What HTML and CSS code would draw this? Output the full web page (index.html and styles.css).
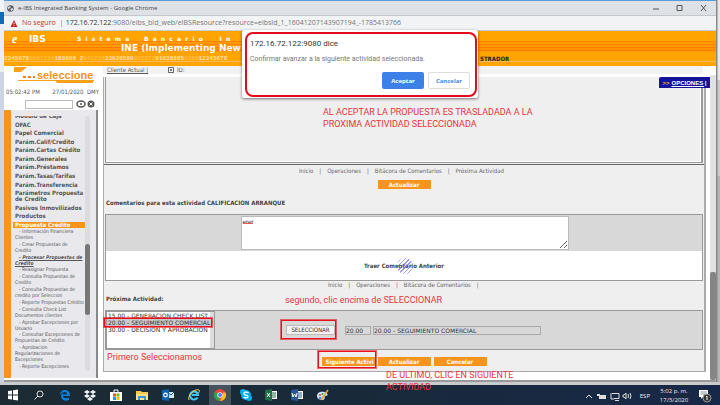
FILE: index.html
```html
<!DOCTYPE html>
<html lang="es">
<head>
<meta charset="utf-8">
<title>e-IBS Integrated Banking System</title>
<link rel="stylesheet" href="styles.css">
</head>
<body>
<div class="desktop">
  <div class="behind-left"></div>
  <div class="window">
    <header class="titlebar">
      <svg class="globe" viewBox="0 0 16 16"><circle cx="8" cy="8" r="7.5" fill="#555b61"/><path d="M3 4l4-1 2 2-3 2-2 3-2-3zM9 8l4-1 1 3-4 4-2-3z" fill="#dee1e6"/></svg>
      <span class="title">e-IBS Integrated Banking System - Google Chrome</span>
      <svg class="winctl" viewBox="0 0 58 10"><path d="M3 6h6M27 2.500h5v5h-5zM51 2l5 6M56 2l-5 6" fill="none" stroke="#555" stroke-width="1"/></svg>
    </header>
    <div class="address">
      <svg class="warn" viewBox="0 0 8 8"><path d="M4 0l4 8H0z" fill="#c5221f"/><path d="M4 3v2M4 6v1" stroke="#fff"/></svg>
      <span class="unsafe">No seguro</span><span class="sep"></span>
      <span class="url"><b>172.16.72.122</b>:9080/eibs_bid_web/eIBSResource?resource=eibsId_1_16041207143907194_-1785413766</span>
    </div>
    <div class="banner">
      <div class="brand"><i class="brand-e">e</i><span class="brand-ibs">IBS</span><span class="system">S &nbsp;i &nbsp;s &nbsp;t &nbsp;e &nbsp;m &nbsp;a &nbsp; &nbsp; &nbsp; B &nbsp;a &nbsp;n &nbsp;c &nbsp;a &nbsp;r &nbsp;i &nbsp;o &nbsp; &nbsp; &nbsp; &nbsp;I &nbsp;n</span></div>
      <div class="bank">INE (Implementing New</div>
      <div class="digits"><span>2345678<em>0001234</em>189809 2<em>041234</em>33920580<em>002872</em>91038085<em>4380</em>12345678</span><b class="role">STRADOR</b></div>
    </div>
    <div class="page">
      <aside class="side">
        <div class="logo">
          <svg class="logo-art" viewBox="0 0 86 18"><path d="M5 0h13L12 5H5z" fill="#f9a01b"/><path d="M9 13.500h76" stroke="#f9a01b"/><path d="M46 13h38v3H48z" fill="#f9a01b"/><path d="M14 10h3M19 10h3M24 10h2" stroke="#f58220" stroke-width="2"/></svg>
          <span class="logo-text">seleccione</span>
        </div>
        <div class="clock"><span>05:02:42 PM</span><span>27/01/2020 &nbsp;DMY</span></div>
        <div class="search">
          <input class="search-box" type="text" aria-label="Buscar">
          <svg class="eyes" viewBox="0 0 20 8"><ellipse cx="5" cy="4" rx="4" ry="3" fill="none" stroke="#555" stroke-width="1.500"/><circle cx="5" cy="4" r="1" fill="#555"/><circle cx="15" cy="4" r="3.500" fill="#555"/><path d="M13.500 2.500l3 3M16.500 2.500l-3 3" stroke="#fff"/></svg>
        </div>
        <div class="menu">
          <nav class="menu-lists">
            <ul class="groups">
              <li>Módulo de Caja</li><li>OFAC</li><li>Papel Comercial</li><li>Parám.Calif/Credito</li><li>Parám.Cartas Crédito</li><li>Parám.Generales</li><li>Parám.Préstamos</li><li>Parám.Tasas/Tarifas</li><li>Parám.Transferencia</li><li>Parámetros Propuesta<br>de Credito</li><li>Pasivos Inmovilizados</li><li>Productos</li><li class="open">Propuesta Crédito</li>
            </ul>
            <ul class="options">
              <li>Información Financiera<br>Clientes</li><li>Crear Propuestas de<br>Credito</li><li class="current">Procesar Propuestas de<br>Credito</li><li>Reasignar Propuesta</li><li>Consulta Propuestas de<br>Credito</li><li>Consulta Propuestas de<br>credito por Seleccion</li><li>Reporte Propuestas Crédito</li><li>Consulta Check List<br>Documentos clientes</li><li>Aprobar Excepciones por<br>Usuario</li><li>Consultar Excepciones de<br>Propuestas de Crédito</li><li>Aprobacion<br>Regularizaciones de<br>Excepciones</li><li>Reporte Excepciones</li>
            </ul>
          </nav>
          <div class="menu-track"><div class="menu-thumb"></div></div>
        </div>
      </aside>
      <main class="main">
        <div class="client"><a href="#c">Cliente Actual |</a><svg class="box-icon" viewBox="0 0 7 7"><path d="M.5.5h6v6h-6z" fill="#fff" stroke="#444"/><path d="M2 3.500h3M3.500 2v3" stroke="#444"/></svg><span>ID:</span></div>
        <div class="frame">
          <a class="opciones" href="#o"><b>&gt;&gt;</b><span>OPCIONES |</span></a>
          <section class="upper"></section>
          <p class="note note-accept">AL ACEPTAR LA PROPUESTA ES TRASLADADA A LA<br>PROXIMA ACTIVIDAD SELECCIONADA</p>
          <nav class="links links-top"><a href="#1">Inicio</a><i>|</i><a href="#2">Operaciones</a><i>|</i><a href="#3">Bitácora de Comentarios</a><i>|</i><a href="#4">Próxima Actividad</a></nav>
          <div class="actions"><button class="btn">Actualizar</button></div>
          <label class="heading" for="coment">Comentarios para esta actividad CALIFICACION ARRANQUE</label>
          <section class="comments">
            <div class="comment-row"><textarea id="coment" class="comment-text" spellcheck="false">erer</textarea><span class="squiggle"></span></div>
            <div class="previous"><b>Traer Comentario Anterior</b><span class="busy"></span></div>
          </section>
          <nav class="links"><a href="#1">Inicio</a><i>|</i><a href="#2">Operaciones</a><i>|</i><a href="#3">Bitácora de Comentarios</a><i>|</i></nav>
          <div class="next-head"><label class="heading" for="next">Próxima Actividad:</label><p class="note note-second">segundo, clic encima de SELECCIONAR</p></div>
          <section class="next">
            <div class="list-wrap">
              <select id="next" class="list" size="4"><option>15.00 - GENERACION CHECK LIST</option><option class="picked">20.00 - SEGUIMIENTO COMERCIAL</option><option>30.00 - DECISION Y APROBACION</option></select>
              <span class="mark mark-list"></span>
            </div>
            <div class="pick">
              <span class="pick-wrap"><button class="select-btn">SELECCIONAR</button><span class="mark mark-pick"></span></span>
              <input class="code" aria-label="Código" value="20.00" readonly>
              <input class="name" aria-label="Actividad" value="20.00 - SEGUIMIENTO COMERCIAL" readonly>
            </div>
          </section>
          <div class="footer">
            <p class="note note-first">Primero Seleccionamos</p>
            <span class="pick-wrap"><button class="btn btn-next">Siguiente Activi</button><span class="mark mark-next"></span></span>
            <button class="btn">Actualizar</button>
            <button class="btn">Cancelar</button>
            <p class="note note-last">DE ULTIMO, CLIC EN SIGUIENTE<br>ACTIVIDAD</p>
          </div>
        </div>
      </main>
      <div class="scroll"><div class="scroll-thumb"></div></div>
    </div>
  </div>
  <div class="behind-right"></div>
  <div class="dialog" role="dialog" aria-labelledby="dlg">
    <h1 id="dlg" class="dialog-title">172.16.72.122:9080 dice</h1>
    <p class="dialog-text">Confirmar avanzar a la siguiente actividad seleccionada.</p>
    <div class="dialog-actions"><button class="ok">Aceptar</button><button class="cancel">Cancelar</button></div>
  </div>
</div>
<footer class="taskbar">
  <div class="apps">
    <span class="app"><svg viewBox="0 0 12 12"><path d="M1 2l4-.6v4.200H1zM6 1.300L11 .6v5H6zM1 6.400h4v4.200L1 10zM6 6.400h5v5l-5-.7z" fill="#fff"/></svg></span>
    <span class="app"><svg viewBox="0 0 12 12"><circle cx="7" cy="5" r="3" fill="none" stroke="#ddd"/><path d="M5 7L1.500 10.500" stroke="#ddd"/></svg></span>
    <span class="app"><svg viewBox="0 0 12 12"><path d="M1 6C1 3 3 1 6 1s5 2 5 6H4c0 2 3 3 6 1.500V11C5 13 2 10 2 7c0-2 2-3 3-3-1 .5-1 1-1 1.500h4C8 2 3 2.500 1 6z" fill="#0a7fdb"/></svg></span>
    <span class="app"><svg viewBox="0 0 12 12"><path d="M3 1l3 2-3 2-3-2zM9 1l3 2-3 2-3-2zM3 5l3 2-3 2-3-2zM9 5l3 2-3 2-3-2zM6 8l3 2-3 2-3-2z" fill="#f2f6f8"/></svg></span>
    <span class="app"><svg viewBox="0 0 12 12"><path d="M4 3V1h4v2" fill="none" stroke="#fff"/><path d="M0 3h12v9H0z" fill="#fff"/><path d="M3 4.500h3v3H3z" fill="#f25022"/><path d="M6.500 4.500h3v3h-3z" fill="#7fba00"/><path d="M3 8h3v3H3z" fill="#00a4ef"/><path d="M6.500 8h3v3h-3z" fill="#ffb900"/></svg></span>
    <span class="app run"><svg viewBox="0 0 12 12"><path d="M0 2h5l1 1h6v8H0z" fill="#f6c84c"/><path d="M0 5h12v6H0z" fill="#ffe08a"/><path d="M2 7h8v4H8V9H4v2H2z" fill="#3a96dd"/></svg></span>
    <span class="app run"><svg viewBox="0 0 12 12"><path d="M5 3h7v6H5z" fill="#cfe6fa"/><path d="M5 3l4 3 3-3" fill="none" stroke="#0a64ad"/><path d="M0 1l7-1v12l-7-1z" fill="#0a64ad"/><circle cx="3.500" cy="6" r="1.800" fill="none" stroke="#fff" stroke-width="1.200"/></svg></span>
    <span class="app"><svg viewBox="0 0 12 12"><path d="M9.500 8.500A4 4 0 1 1 10 6H4" fill="none" stroke="#45c1f0" stroke-width="2.200"/><path d="M1 11C-1 7 7-1 11 1c1 1 0 2-.5 3" fill="none" stroke="#ffd24d"/></svg></span>
    <span class="app run active"><svg viewBox="0 0 12 12"><circle cx="6" cy="6" r="6" fill="#e8453c"/><path d="M6 6L.8 3A6 6 0 0 0 6 12z" fill="#2ba24c"/><path d="M6 12l3-6V3.500h2.500A6 6 0 0 1 6 12z" fill="#fbc116"/><circle cx="6" cy="6" r="2.700" fill="#fff"/><circle cx="6" cy="6" r="2" fill="#4285f4"/></svg></span>
    <span class="app run"><svg viewBox="0 0 12 12"><circle cx="6" cy="6" r="5" fill="#00aff0"/><circle cx="3" cy="3" r="3" fill="#00aff0"/><circle cx="9" cy="9" r="3" fill="#00aff0"/><path d="M8.500 4C7 2.500 3.500 3 4 5c.5 1.500 4 .8 4 2.500S4.500 9.500 3.500 8" fill="none" stroke="#fff" stroke-width="1.300"/></svg></span>
    <span class="app run"><svg viewBox="0 0 12 12"><path d="M6 2h6v8H6z" fill="#fff"/><path d="M7 4h4M7 6h4M7 8h4" stroke="#1e7145"/><path d="M0 1l7-1v12l-7-1z" fill="#1e7145"/><path d="M2 4l3 4M5 4L2 8" stroke="#fff"/></svg></span>
    <span class="app run"><svg viewBox="0 0 12 12"><path d="M6 2h6v8H6z" fill="#fff"/><path d="M7 4h4M7 6h4M7 8h4" stroke="#2b579a"/><path d="M0 1l7-1v12l-7-1z" fill="#2b579a"/><path d="M1 4l1 4 1.500-3L5 8l1-4" fill="none" stroke="#fff"/></svg></span>
    <span class="app run"><svg viewBox="0 0 12 12"><path d="M0 7c0-4 4-5 8-4 4 2 3 4 0 4-1 1 1 3-2 4-3 0-6-1-6-4z" fill="#c6e2f3"/><circle cx="3" cy="6" r="1" fill="#e84a3c"/><circle cx="5.500" cy="5" r="1" fill="#41a348"/><circle cx="3" cy="9" r="1" fill="#3471c8"/><path d="M4 11L11 1" stroke="#e9a13b" stroke-width="1.500"/></svg></span>
  </div>
  <div class="tray">
    <svg class="tray-icons" viewBox="0 0 48 12"><path d="M1 8l3-3 3 3" fill="none" stroke="#eee"/><path d="M14 5h7v4h-7zM12 4h3v2h-3z" fill="#ddd"/><path d="M27 3.500h7v5h-5M26 3v6h3M30 10.500h4" fill="none" stroke="#ddd"/><path d="M38 5h1l2-2v6l-2-2h-1zM43 4q1 2 0 4M45 3q2 3 0 6" fill="none" stroke="#ddd"/></svg>
    <span>ESP</span>
    <div class="date">5:02 p. m.<br>17/3/2020</div>
    <svg class="action" viewBox="0 0 14 14"><path d="M1 1h9v7H5L3 10V8H1z" fill="#fff"/><path d="M2.500 3h6M2.500 5h6" stroke="#8794a8"/><circle cx="9" cy="9" r="4" fill="#333" stroke="#999"/><path d="M8 8l1-1v4" fill="none" stroke="#fff"/></svg>
  </div>
</footer>
</body>
</html>
```
FILE: styles.css
```css
* { box-sizing: border-box; }
body {
  margin: 0; min-height: 100vh; overflow: hidden;
  display: flex; flex-direction: column;
  font: 6px/8px "DejaVu Sans Condensed", "DejaVu Sans", sans-serif; color: #555;
}
p, h1, ul { margin: 0; padding: 0; font-weight: normal; }
ul { list-style: none; }
a { color: inherit; text-decoration: none; }
i { font-style: normal; }
svg { display: block; flex: none; }
button, input, textarea, select { font: inherit; border-radius: 0; margin: 0; padding: 0; }

.desktop { position: relative; flex: 1; display: flex; padding-bottom: 3px; background: #c9cbcd; }
.behind-left { width: 4px; background: linear-gradient(#f0f4f8 12px, #0f6ab8 12px 24px, #e9edf5 24px 72px, #cdd5e4 72px); }
.behind-right { width: 4px; background: linear-gradient(90deg, #888 0 1px, transparent 2px), linear-gradient(#e8e8e8 80px, #ccc 80px 176px, #b5b5b5 176px); }
.window { flex: 1; display: flex; flex-direction: column; background: #fff; border-top: 1px solid #5b9bd5; border-bottom: 2px solid #999; }

.titlebar { display: flex; align-items: center; height: 15px; padding: 0 8px 0 3px; gap: 4px; background: #dee1e6; border-bottom: 1px solid #c4c7cb; }
.globe { width: 7px; height: 7px; }
.title { flex: 1; font: 6px/10px "Open Sans", sans-serif; color: #444; }
.winctl { width: 58px; height: 10px; }
.address { display: flex; align-items: center; height: 15px; padding-left: 6px; background: #f1f3f4; font: 7px/10px "Open Sans", sans-serif; color: #777; border-bottom: 1px solid #ccc; }
.warn { width: 8px; height: 7px; margin-right: 4px; }
.unsafe { color: #c5352b; }
.sep { width: 1px; height: 7px; margin: 0 4px 0 5px; background: #bbb; }
.url b { font-weight: normal; color: #333; }

.banner {
  height: 35px; padding: 3px 0 0 8px; color: #fff; overflow: hidden; white-space: nowrap;
  background: linear-gradient(transparent 10px, #ff8300 10px 11px, #ff9a00 11px 13px, #ff8300 13px 14px, #ff9a00 14px 16px, #ff7b00 16px 17px, #ff9300 17px 19px, #ff7b00 19px 20px, #ffa200 20px 21px, transparent 21px 30px, #ffbd59 30px 31px, transparent 31px), #ffa400;
}
.brand { display: flex; align-items: center; height: 10px; font: bold 9px/10px "DejaVu Sans", sans-serif; }
.brand-e { width: 13px; font: italic bold 12px/10px "Liberation Serif", serif; }
.brand-ibs { width: 52px; padding-left: 4px; }
.system { font: bold 6px/10px "DejaVu Sans", sans-serif; }
.bank { height: 10px; padding-left: 109px; font: bold 9px/9px "DejaVu Sans", sans-serif; }
.digits { display: flex; align-items: center; height: 10px; font: bold 6px/8px "Liberation Mono", monospace; color: #ffe2b0; margin-left: -8px; }
.digits span { width: 476px; overflow: hidden; }
.digits em { font-style: normal; color: #ffbe50; }
.role { font: bold 6px/8px "DejaVu Sans Condensed", "DejaVu Sans", sans-serif; color: #222; }

.page { flex: 1; display: flex; }
.side { width: 99px; display: flex; flex-direction: column; padding-bottom: 2px; }
.logo { position: relative; height: 20px; padding: 1px 0 0 5px; }
.logo-art { width: 86px; height: 18px; }
.logo-text { position: absolute; left: 33px; top: 2px; font: bold 11px/14px "Liberation Sans", sans-serif; color: #f6921e; }
.clock { display: flex; justify-content: space-between; height: 13px; padding: 2px 4px 0 2px; white-space: nowrap; }
.search { display: flex; align-items: center; height: 10px; padding-left: 21px; gap: 3px; }
.search-box { width: 48px; height: 9px; border: 1px solid #bbb; background: #fff; }
.eyes { width: 20px; height: 8px; }
.menu { flex: 1; display: flex; width: 94px; margin-top: 1px; padding-right: 6px; background: #e9e9ed; border-left: 7px solid #f7941d; border-right: 2px solid #888; line-height: 6px; white-space: nowrap; }
.menu-lists { flex: 1; margin-top: 6px; height: 254px; overflow: hidden; }
.groups, .options { display: flex; flex-direction: column; justify-content: space-between; }
.groups { height: 115px; margin-top: -3px; padding-left: 4px; font-weight: bold; }
.open { margin-left: -2px; padding-left: 2px; color: #fff; background: #f7941d; }
.options { height: 141px; padding-left: 4px; font-size: 5px; }
.options li::before { content: " - "; padding-left: 4px; }
.current { font-weight: bold; font-style: italic; text-decoration: underline; }
.menu-track { width: 5px; margin: 6px 0 7px; background: #dcdce0; border-radius: 3px; }
.menu-thumb { height: 71px; margin-top: 128px; background: #777; border-radius: 3px; }

.main { flex: 1; display: flex; flex-direction: column; }
.client { display: flex; align-items: center; gap: 3px; height: 8px; padding-left: 4px; margin-right: 3px; background: #f2f2f2; }
.client a { width: 58px; text-decoration: underline; }
.box-icon { width: 6px; height: 6px; }
.frame { position: relative; margin-top: 3px; background: #efefef; border: solid #aaa; border-width: 0 2px 1px 1px; }
.upper { height: 86px; margin: 0 1px 1px; border: solid #999; border-width: 0 2px 1px 1px; box-shadow: inset -1px -1px #fff; }
.opciones { position: absolute; right: -6px; top: 0; width: 51px; height: 11px; display: flex; gap: 2px; align-items: center; justify-content: center; background: #14149a; color: #fff; font: bold 6px/10px "Liberation Sans", sans-serif; border-radius: 2px 0 0; }
.opciones b { color: #f2b233; }
.opciones span { text-decoration: underline; }
.links { display: flex; gap: 6px; height: 10px; margin-left: 224px; color: #666; white-space: nowrap; }
.links-top { height: 15px; margin-left: 0; padding: 2px 0 0 195px; border-top: 1px solid #666; }
.actions { display: flex; justify-content: center; padding: 1px 0 0; height: 20px; }
.btn { width: 53px; height: 9px; border: 0; background: #f7941d; color: #fff; font: bold 6px/8px "DejaVu Sans Condensed", "DejaVu Sans", sans-serif; white-space: nowrap; overflow: hidden; }
.btn-next { padding-left: 4px; text-align: left; }
.heading { display: block; padding-left: 2px; font-weight: bold; color: #444; }
.comments { margin: 7px 1px 0; border: 1px solid #999; background: #fff; }
.comment-row { position: relative; display: flex; justify-content: center; height: 36px; padding: 1px 0; background: #d8d8d8; }
.comment-text { width: 328px; margin-left: 1px; padding: 1px; border: 1px solid #bbb; background: #fff; color: #222; resize: both; }
.squiggle { position: absolute; left: 137px; top: 8px; width: 10px; height: 1px; background: #e55; }
.previous { position: relative; display: flex; justify-content: center; align-items: center; height: 29px; color: #444; }
.busy { position: absolute; left: 50%; top: 7px; width: 16px; height: 16px; margin-left: -7px; border-radius: 50%; background: repeating-linear-gradient(135deg, #6464e6aa 0 1px, transparent 1px 3px); }
.next-head { position: relative; padding-top: 4px; height: 19px; }
.next { display: flex; height: 40px; margin: 0 1px; border: 1px solid #999; background: #d8d8d8; }
.list-wrap { position: relative; width: 109px; }
.list { width: 109px; height: 38px; border: 1px solid #999; background: linear-gradient(270deg, #ddd 4px, #fff 4px); overflow: hidden scroll; color: #333; scrollbar-width: none; }
.list, .code, .name { font-family: "DejaVu Sans", sans-serif; }
.list option { padding: 0 1px; min-height: 7px; line-height: 7px; overflow: hidden; }
.picked { background: #c8c8c8; }
.mark { position: absolute; border: 1px solid #e8101c; box-shadow: 0 0 0 1px #e8101c99; pointer-events: none; }
.mark-list { left: -2px; right: 3px; top: 7px; height: 9px; }
.pick { display: flex; align-items: center; flex: 1; padding-left: 71px; }
.pick-wrap { position: relative; display: flex; }
.select-btn { width: 49px; height: 10px; border: 1px solid #bbb; background: #f2f2f2; color: #333; white-space: nowrap; }
.mark-pick { left: -5px; right: -1px; top: -5px; bottom: -4px; }
.code, .name { height: 9px; border: 1px solid #aaa; background: #d8d8d8; color: #333; }
.code { width: 26px; margin: 0 2px 0 10px; }
.name { width: 168px; }
.footer { position: relative; display: flex; justify-content: center; align-items: flex-start; gap: 3px; height: 21px; padding-top: 7px; }
.mark-next { left: -4px; right: -1px; top: -6px; bottom: -2px; }
.note { position: absolute; font: 9px/12px Roboto, sans-serif; color: #e8343c; white-space: nowrap; }
.note-accept { left: 219px; top: 29px; }
.note-second { left: 181px; top: 3px; }
.note-first { left: 3px; top: 1px; }
.note-last { left: 282px; top: 19px; }
.scroll { width: 6px; margin: 9px 0 0 4px; background: #e2e2e2; }
.scroll-thumb { height: 108px; margin-top: 197px; background: #858585; border-radius: 2px; }

.dialog { position: absolute; top: 30px; left: 50%; width: 236px; height: 68px; margin-left: -118px; padding: 7px 8px; background: #fff; box-shadow: 0 1px 3px #0008; border-radius: 2px; font-family: Roboto, sans-serif; }
.dialog::before { content: ""; position: absolute; inset: 2px 1px 1px 3px; border: 2px solid #e30b1c; border-radius: 8px; pointer-events: none; }
.dialog-title { font-size: 8px; line-height: 14px; color: #333; }
.dialog-text { margin-top: 3px; font-size: 7px; line-height: 10px; color: #777; }
.dialog-actions { position: relative; display: flex; justify-content: flex-end; gap: 4px; margin-top: 8px; }
.dialog-actions button { width: 42px; height: 17px; border: 0; border-radius: 2px; font: bold 6px/10px "Open Sans", sans-serif; }
.dialog-actions .ok { background: #3c80e8; color: #fff; }
.dialog-actions .cancel { background: #fff; color: #4a86e8; border: 1px solid #ddd; }

.taskbar { display: flex; justify-content: space-between; height: 22px; background: linear-gradient(90deg, #1c2b33, #182a3a 50%, #182848); color: #eee; }
.apps { display: flex; width: 336px; }
.app { flex: 1; display: flex; align-items: center; justify-content: center; margin: 0 2px; border-bottom: 2px solid transparent; }
.app svg { width: 12px; height: 12px; }
.run { border-color: #76b9ed; }
.active { background: #46535f; }
.tray { display: flex; align-items: center; gap: 7px; padding-right: 8px; font: 6px/9px "Open Sans", sans-serif; }
.tray-icons { width: 48px; height: 12px; }
.date { width: 34px; text-align: center; font-size: 6px; line-height: 9px; }
.action { width: 14px; height: 14px; }
```
